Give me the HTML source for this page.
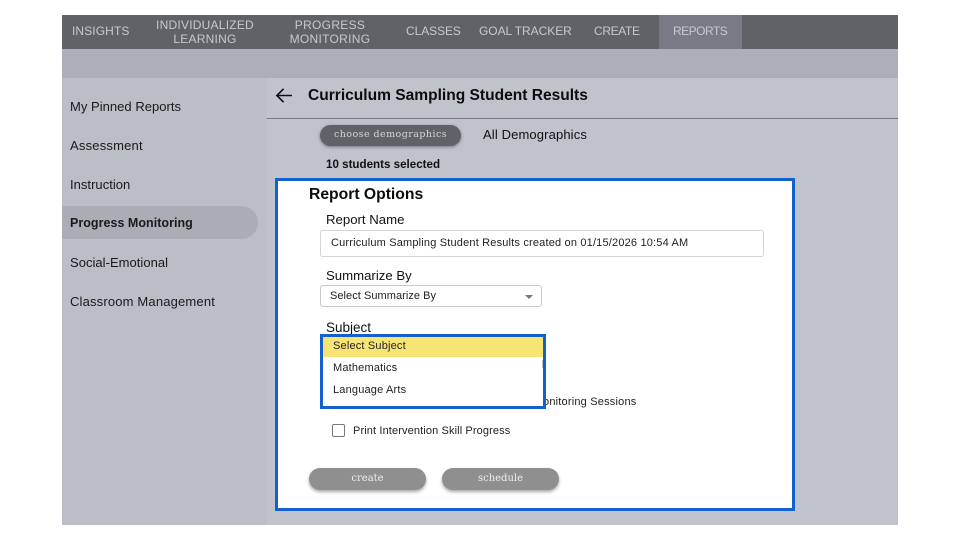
<!DOCTYPE html>
<html><head><meta charset="utf-8"><style>
html,body{margin:0;padding:0;background:#fff}
body{width:960px;height:540px;position:relative;overflow:hidden;font-family:"Liberation Sans",sans-serif;color:#111}
div{position:absolute;box-sizing:border-box}
.t{white-space:nowrap;line-height:16px}
.nav{color:#c6c9ce;font-size:12px;text-align:center;line-height:14px;white-space:nowrap}
.side{left:70px;font-size:13px;color:#1a1a1a;white-space:nowrap;line-height:16px;letter-spacing:.03px}
.s{font-family:"DejaVu Serif","Liberation Serif",serif;color:#eee;text-align:center}
.btn{background:#8f8f8f;border-radius:12px;box-shadow:0 2px 3px rgba(0,0,0,.35);font-size:10px;line-height:20px;height:22px;top:468px}
.f{font-size:11px;letter-spacing:.18px;color:#222}
</style></head><body>
<div style="left:62px;top:15px;width:836px;height:510px;background:#bfc3cc"></div>
<div style="left:62px;top:78px;width:205px;height:447px;background:#babec7"></div>
<div style="left:62px;top:15px;width:836px;height:34px;background:#5f6267"></div>
<div style="left:659px;top:15px;width:83px;height:34px;background:#787b84"></div>
<div style="left:62px;top:49px;width:836px;height:29px;background:#abafb8"></div>

<div class="nav" style="left:72px;top:24px;letter-spacing:.1px">INSIGHTS</div>
<div class="nav" style="left:145px;width:120px;top:18px;letter-spacing:.23px">INDIVIDUALIZED<br>LEARNING</div>
<div class="nav" style="left:270px;width:120px;top:18px;letter-spacing:.3px">PROGRESS<br>MONITORING</div>
<div class="nav" style="left:406px;top:24px;letter-spacing:-.07px">CLASSES</div>
<div class="nav" style="left:479px;top:24px;letter-spacing:-.05px">GOAL TRACKER</div>
<div class="nav" style="left:594px;top:24px;letter-spacing:-.35px">CREATE</div>
<div class="nav" style="left:673px;top:24px;letter-spacing:-.5px">REPORTS</div>

<div class="side" style="top:99px">My Pinned Reports</div>
<div class="side" style="top:138px;letter-spacing:.2px">Assessment</div>
<div class="side" style="top:177px">Instruction</div>
<div style="left:62px;top:206px;width:196px;height:33px;background:#a9adb6;border-radius:0 17px 17px 0"></div>
<div class="side" style="top:215px;font-weight:bold;font-size:12.5px">Progress Monitoring</div>
<div class="side" style="top:255px">Social-Emotional</div>
<div class="side" style="top:294px;letter-spacing:.17px">Classroom Management</div>

<svg style="position:absolute;left:274px;top:86px" width="20" height="20" viewBox="0 0 20 20"><path d="M18 9.5H2.8M9.6 2.8L2.8 9.5L9.6 16.2" fill="none" stroke="#111" stroke-width="1.6"/></svg>
<div class="t" style="left:308px;top:88px;font-size:15.55px;font-weight:bold;color:#0c0c0c">Curriculum Sampling Student Results</div>
<div style="left:267px;top:118px;width:631px;height:1px;background:#77797f"></div>

<div class="s" style="left:320px;top:125px;width:141px;height:21px;border-radius:11px;background:#5f6267;box-shadow:0 1px 3px rgba(0,0,0,.4);font-size:9.5px;line-height:20px;letter-spacing:.45px;color:#d5d6d9">choose demographics</div>
<div class="t" style="left:483px;top:127px;font-size:13px;letter-spacing:.13px">All Demographics</div>
<div class="t" style="left:326px;top:157px;font-size:11.6px;font-weight:bold">10 students selected</div>

<div style="left:275px;top:178px;width:520px;height:333px;background:#fff;border:3px solid #1560cf"></div>
<div class="t" style="left:309px;top:187px;font-size:15.7px;font-weight:bold;color:#0c0c0c">Report Options</div>
<div class="t" style="left:326px;top:212px;font-size:13.2px">Report Name</div>
<div style="left:320px;top:230px;width:444px;height:27px;border:1px solid #d4d4d4;border-radius:3px"></div>
<div class="t f" style="left:331px;top:235px">Curriculum Sampling Student Results created on 01/15/2026 10:54 AM</div>
<div class="t" style="left:326px;top:268px;font-size:13.2px">Summarize By</div>
<div style="left:320px;top:285px;width:222px;height:22px;border:1px solid #c9c9c9;border-radius:3px"></div>
<div class="t f" style="left:330px;top:288px;letter-spacing:.05px">Select Summarize By</div>
<div style="left:525px;top:295px;width:0;height:0;border-left:4px solid transparent;border-right:4px solid transparent;border-top:4px solid #777"></div>
<div class="t" style="left:326px;top:320px;font-size:13.5px">Subject</div>
<div class="t f" style="left:543px;top:394px;letter-spacing:.2px">onitoring Sessions</div>

<div style="left:320px;top:334px;width:226px;height:75px;background:#fff;border:3px solid #1560cf"></div>
<div style="left:323px;top:337px;width:220px;height:20px;background:#f6e574"></div>
<div style="left:542px;top:360px;width:1px;height:8px;background:#bbb"></div>
<div class="t f" style="left:333px;top:338px">Select Subject</div>
<div class="t f" style="left:333px;top:360px">Mathematics</div>
<div class="t f" style="left:333px;top:382px">Language Arts</div>

<div style="left:332px;top:424px;width:13px;height:13px;border:1.5px solid #777;border-radius:2px"></div>
<div class="t f" style="left:353px;top:423px;letter-spacing:.12px">Print Intervention Skill Progress</div>

<div class="s btn" style="left:309px;width:117px;line-height:21px">create</div>
<div class="s btn" style="left:442px;width:117px;line-height:21px">schedule</div>
</body></html>
